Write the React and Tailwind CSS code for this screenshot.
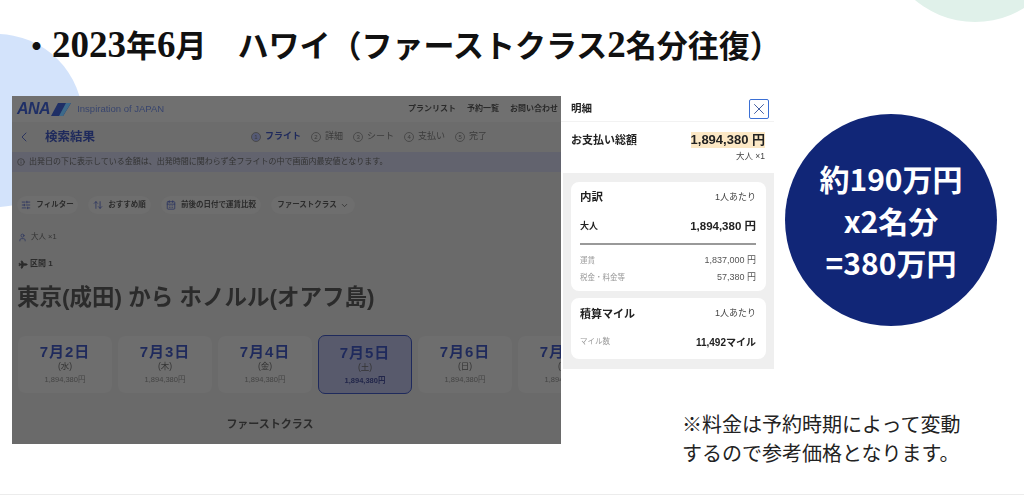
import { SlidersHorizontal, ArrowUpDown, CalendarDays, ChevronDown, ChevronLeft, User, Plane, Info, X } from 'lucide-react';

const SANS = 'font-["Liberation_Sans","Noto_Sans_CJK_JP",sans-serif]';
const CJK = 'font-["Noto_Sans_CJK_JP",sans-serif]';

const PILLS = [
  { icon: SlidersHorizontal, label: 'フィルター', w: 'w-[61px]' },
  { icon: ArrowUpDown, label: 'おすすめ順', w: 'w-[63px]' },
  { icon: CalendarDays, label: '前後の日付で運賃比較', w: 'w-[100px]' },
];

const STEPS = [
  { n: '1', label: 'フライト', active: true },
  { n: '2', label: '詳細' },
  { n: '3', label: 'シート' },
  { n: '4', label: '支払い' },
  { n: '5', label: '完了' },
];

const DATES = [
  { d: '7月2日', w: '(水)' },
  { d: '7月3日', w: '(木)' },
  { d: '7月4日', w: '(金)' },
  { d: '7月5日', w: '(土)', selected: true },
  { d: '7月6日', w: '(日)' },
  { d: '7月7日', w: '(月)' },
];

function AnaHeader() {
  return (
    <div className="h-[26px] flex items-center pl-[5px] bg-[#707070] overflow-hidden">
      <span className="text-[16px] font-bold italic text-[#1f2f66] tracking-[-0.5px] leading-none">ANA</span>
      <svg width="20" height="13" viewBox="0 0 20 13" className="ml-[1px] shrink-0">
        <polygon points="7,0 20,0 12,13 0,13" fill="#1f2f66" />
        <polygon points="15,0 20,0 12,13 8,13" fill="#3d6a8a" />
      </svg>
      <span className="ml-[6px] text-[9.5px] text-[#38456e]">Inspiration of JAPAN</span>
      <div className="ml-auto flex gap-[11px] text-[8px] font-bold text-[#2a2a2a] whitespace-nowrap mr-[3px]">
        <span>プランリスト</span>
        <span>予約一覧</span>
        <span>お問い合わせ</span>
      </div>
    </div>
  );
}

function StepsRow() {
  return (
    <div className="h-[30px] flex items-center pl-[4px] bg-[#6c6c6c]">
      <ChevronLeft size={16} strokeWidth={1.5} className="text-[#2c3560]" />
      <span className="ml-[13px] text-[12.5px] font-bold text-[#1f2a5c]">検索結果</span>
      <div className="ml-[156px] flex gap-[10px] text-[9px] text-[#3b3b3b] whitespace-nowrap">
        {STEPS.map((s) => (
          <span key={s.n} className="flex items-center gap-[4px]">
            <span className={`w-[10px] h-[10px] rounded-full flex items-center justify-center text-[6px] border border-[#4a4a4a] ${s.active ? 'bg-[#555a75]' : ''}`}>{s.n}</span>
            <span className={s.active ? 'font-bold text-[#1f2a5c]' : ''}>{s.label}</span>
          </span>
        ))}
      </div>
    </div>
  );
}

function DateCard({ d, w, selected }) {
  return (
    <div className={`w-[94px] shrink-0 rounded-[7px] flex flex-col items-center ${selected ? 'h-[59px] pt-[8px] bg-[#585a6c] border border-[#1f2a5c]' : 'h-[57px] pt-[7px] bg-[#6e6e6e]'}`}>
      <span className="text-[15px] font-bold leading-[18px] tracking-[1px] text-[#1f2a5c]">{d}</span>
      <span className="text-[8.5px] leading-[11px] text-[#333]">{w}</span>
      <span className={`text-[7.5px] leading-[15px] ${selected ? 'font-bold text-[#22264a]' : 'text-[#444]'}`}>1,894,380円</span>
    </div>
  );
}

function FlightPanel() {
  return (
    <div className="w-[549px] h-[348px] shrink-0 bg-[#6a6a6a] overflow-hidden flex flex-col blur-[0.4px]">
      <AnaHeader />
      <StepsRow />
      <div className="h-[20px] flex items-center gap-[4px] pl-[5px] bg-[#62636e] text-[8px] text-[#333] whitespace-nowrap">
        <Info size={8} />
        <span>出発日の下に表示している金額は、出発時間に関わらず全フライトの中で画面内最安値となります。</span>
      </div>
      <div className="flex gap-[10px] pl-[5px] mt-[24px]">
        {PILLS.map(({ icon: Icon, label, w }) => (
          <div key={label} className={`${w} h-[18px] rounded-full bg-[#6e6e6e] flex items-center justify-center gap-[5px] text-[7.5px] font-bold text-[#2b2b2b] whitespace-nowrap`}>
            <Icon size={10} className="text-[#2c3560]" />
            {label}
          </div>
        ))}
        <div className="w-[84px] h-[18px] rounded-full bg-[#6e6e6e] flex items-center justify-center gap-[3px] text-[7.5px] font-bold text-[#2b2b2b] whitespace-nowrap">
          ファーストクラス
          <ChevronDown size={9} />
        </div>
      </div>
      <div className="mt-[16px] pl-[6px] flex items-center gap-[4px] text-[7.5px] text-[#333] h-[14px]">
        <User size={9} className="text-[#2c3560]" />
        <span>大人 ×1</span>
      </div>
      <div className="mt-[13px] pl-[6px] flex items-center gap-[3px] text-[8px] font-bold text-[#2b2b2b] h-[14px]">
        <Plane size={9} fill="currentColor" className="rotate-45" />
        <span>区間 1</span>
      </div>
      <div className="mt-[12px] pl-[5px] text-[22.5px] leading-[30px] font-bold text-[#2b2b2b] whitespace-nowrap">
        東京(成田) から ホノルル(オアフ島)
      </div>
      <div className="mt-[22px] pl-[6px] flex gap-[6px] items-center h-[59px]">
        {DATES.map((x) => (
          <DateCard key={x.d} {...x} />
        ))}
      </div>
      <div className="mt-[22px] text-center text-[11px] font-bold text-[#2b2b2b] ml-[-33px]">ファーストクラス</div>
    </div>
  );
}

function DetailPanel() {
  return (
    <div className="w-[213px] h-[273px] shrink-0 bg-white flex flex-col text-[#222] blur-[0.3px]">
      <div className="h-[26px] flex items-center justify-between pl-[10px] pr-[5px] border-b border-[#f2f2f2]">
        <span className="text-[10.5px] font-bold">明細</span>
        <span className="w-[20px] h-[20px] border border-[#3b6fd4] rounded-[2px] flex items-center justify-center">
          <X size={18} strokeWidth={1.1} className="text-[#1f3f8f]" />
        </span>
      </div>
      <div className="h-[51px] flex justify-between pl-[10px] pr-[9px] pt-[10px]">
        <span className="text-[11px] font-bold leading-[16px]">お支払い総額</span>
        <div className="flex flex-col items-end">
          <span className="bg-[#fce8c5] h-[16px] text-[13px] leading-[16px] font-bold">1,894,380 円</span>
          <span className="text-[8.5px] leading-[16px] text-[#444]">大人 ×1</span>
        </div>
      </div>
      <div className="flex-1 ml-[2px] bg-[#efefef] px-[8px] pt-[9px] flex flex-col gap-[7px]">
        <div className="h-[109px] bg-white rounded-[8px] pl-[9px] pr-[10px] pt-[8px]">
          <div className="flex justify-between items-center h-[16px]">
            <span className="text-[11.5px] font-bold">内訳</span>
            <span className="text-[9px] text-[#444]">1人あたり</span>
          </div>
          <div className="flex justify-between items-center h-[16px] mt-[13px]">
            <span className="text-[9px] font-bold">大人</span>
            <span className="text-[11.5px] font-bold">1,894,380 円</span>
          </div>
          <div className="h-[2px] bg-[#999] mt-[8px]" />
          <div className="flex justify-between items-center h-[16px] mt-[8px] text-[#555]">
            <span className="text-[7.5px] text-[#999]">運賃</span>
            <span className="text-[9px]">1,837,000 円</span>
          </div>
          <div className="flex justify-between items-center h-[16px] mt-px text-[#555]">
            <span className="text-[7.5px] text-[#999]">税金・料金等</span>
            <span className="text-[9px]">57,380 円</span>
          </div>
        </div>
        <div className="h-[61px] bg-white rounded-[8px] pl-[9px] pr-[10px] pt-[8px]">
          <div className="flex justify-between items-center h-[16px]">
            <span className="text-[11px] font-bold">積算マイル</span>
            <span className="text-[9px] text-[#444]">1人あたり</span>
          </div>
          <div className="flex justify-between items-center h-[16px] mt-[12px]">
            <span className="text-[7.5px] text-[#999]">マイル数</span>
            <span className="text-[10px] font-bold">11,492マイル</span>
          </div>
        </div>
      </div>
    </div>
  );
}

export default function App() {
  return (
    <div className={`${SANS} relative w-[1024px] h-[495px] bg-white overflow-hidden border-b border-[#ececec]`}>
      <div className="absolute left-[-90px] top-[34px] w-[173px] h-[173px] rounded-full bg-[#d3e3fb]" />
      <div className="absolute left-[882px] top-[-164px] w-[186px] h-[186px] rounded-full bg-[#e0f1ea]" />

      <div className="relative">
        <h1 className='h-[96px] pl-[21px] pt-[25px] text-[31px] leading-[40px] font-bold text-[#111] whitespace-nowrap font-["Liberation_Serif","Noto_Sans_CJK_JP",serif]'>
          ・<span className="text-[37px]">2023</span>年<span className="text-[37px]">6</span>月　ハワイ（ファーストクラス<span className="text-[37px]">2</span>名分往復）
        </h1>
        <div className="flex pl-[12px] items-start">
          <FlightPanel />
          <DetailPanel />
          <div className="pl-[11px] pt-[18px] flex flex-col">
            <div className={`${CJK} w-[212px] h-[212px] rounded-full bg-[#112677] flex flex-col items-center justify-center text-white text-[30px] leading-[42px] font-bold`}>
              <span>約190万円</span>
              <span>x2名分</span>
              <span>=380万円</span>
            </div>
            <p className={`${CJK} mt-[83px] ml-[-103px] text-[20px] leading-[29px] text-[#222] whitespace-nowrap`}>
              ※料金は予約時期によって変動
              <br />
              するので参考価格となります。
            </p>
          </div>
        </div>
      </div>
    </div>
  );
}
